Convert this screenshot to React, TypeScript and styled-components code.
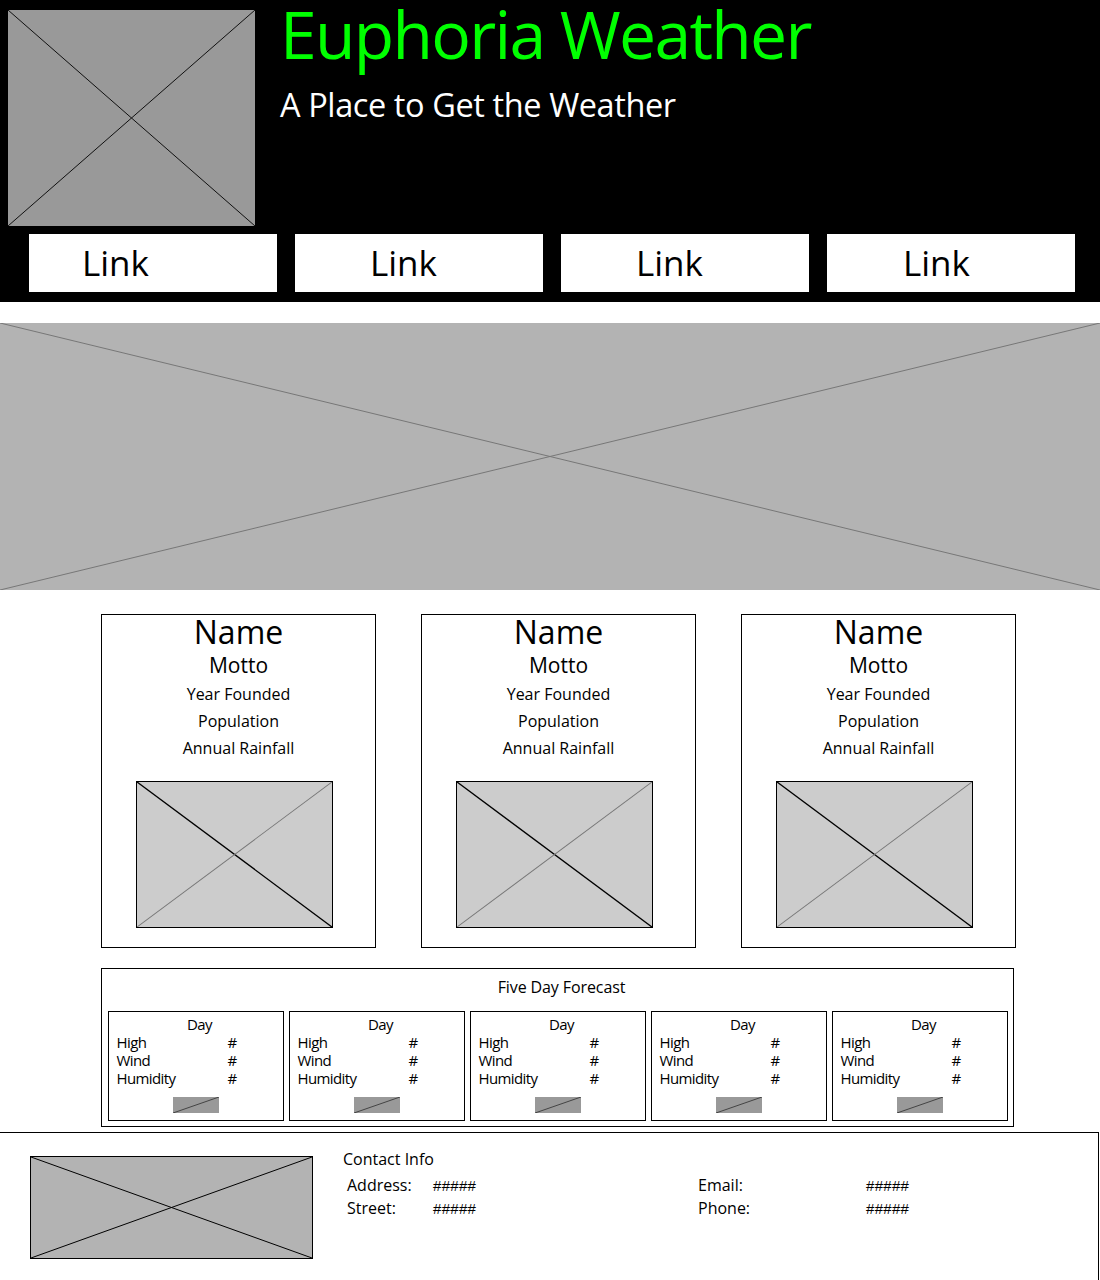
import React from "react";
import styled, { createGlobalStyle } from "styled-components";

const GlobalStyle = createGlobalStyle`
  html, body {
    margin: 0;
    padding: 0;
    background: #ffffff;
  }
  body {
    font-family: "Open Sans", "Noto Sans", sans-serif;
    color: #000000;
  }
`;

const Page = styled.div`
  width: 1100px;
  min-height: 1280px;
  display: flex;
  flex-direction: column;
`;

/* ---------- placeholder drawing ---------- */

const Frame = styled.div<{ $w: number; $h: number; $fill: string; $border?: string }>`
  width: ${({ $w }) => `${$w}px`};
  height: ${({ $h }) => `${$h}px`};
  background: ${({ $fill }) => $fill};
  border: ${({ $border }) => ($border ? `1px solid ${$border}` : "none")};
  box-sizing: border-box;
  flex-shrink: 0;

  svg {
    display: block;
    width: 100%;
    height: 100%;
  }
`;

interface PlaceholderProps {
  width: number;
  height: number;
  fill: string;
  border?: string;
  /** stroke of the line from top-left to bottom-right (omit to hide) */
  down?: string;
  downWidth?: number;
  /** stroke of the line from bottom-left to top-right (omit to hide) */
  up?: string;
  upWidth?: number;
}

function Placeholder({
  width,
  height,
  fill,
  border,
  down,
  downWidth = 1,
  up,
  upWidth = 1,
}: PlaceholderProps) {
  return (
    <Frame $w={width} $h={height} $fill={fill} $border={border}>
      <svg viewBox="0 0 100 100" preserveAspectRatio="none">
        {down && (
          <line
            x1="0"
            y1="0"
            x2="100"
            y2="100"
            stroke={down}
            strokeWidth={downWidth}
            vectorEffect="non-scaling-stroke"
          />
        )}
        {up && (
          <line
            x1="0"
            y1="100"
            x2="100"
            y2="0"
            stroke={up}
            strokeWidth={upWidth}
            vectorEffect="non-scaling-stroke"
          />
        )}
      </svg>
    </Frame>
  );
}

/* ---------- header ---------- */

const Header = styled.header`
  background: #000000;
  padding: 10px 0 10px 8px;
  display: flex;
  flex-direction: column;
  gap: 8px;
`;

const Brand = styled.div`
  display: flex;
  align-items: flex-start;
  gap: 25px;
`;

const Titles = styled.div`
  display: flex;
  flex-direction: column;
`;

const Title = styled.h1`
  margin: -1px 0 0 0;
  font-size: 66px;
  font-weight: 400;
  line-height: 48px;
  letter-spacing: -1.7px;
  color: #00ff00;
  white-space: nowrap;
`;

const Subtitle = styled.div`
  margin-top: 26px;
  font-size: 32.5px;
  line-height: 44px;
  letter-spacing: -0.4px;
  color: #ffffff;
`;

const Nav = styled.nav`
  display: flex;
  gap: 18px;
  padding-left: 21px;
`;

const NavLink = styled.a<{ $indent: number }>`
  width: 248px;
  height: 58px;
  background: #ffffff;
  box-sizing: border-box;
  padding-left: ${({ $indent }) => `${$indent}px`};
  font-size: 35px;
  line-height: 58px;
  color: #000000;
  text-decoration: none;
`;

/* ---------- hero ---------- */

const Hero = styled.section`
  margin-top: 21px;
`;

/* ---------- city cards ---------- */

const Cards = styled.section`
  display: flex;
  gap: 45px;
  padding: 24px 0 0 101px;
`;

const Card = styled.article`
  width: 275px;
  height: 334px;
  border: 1px solid #000000;
  box-sizing: border-box;
  display: flex;
  flex-direction: column;
  align-items: center;
`;

const CardName = styled.div`
  font-size: 32px;
  line-height: 34px;
`;

const CardMotto = styled.div`
  margin-top: 1px;
  font-size: 21px;
  line-height: 30px;
`;

const Facts = styled.div`
  margin-top: 1px;
  display: flex;
  flex-direction: column;
  align-items: center;
`;

const CardFact = styled.div`
  font-size: 16px;
  line-height: 27px;
`;

const CardImage = styled.div`
  margin-top: 19px;
  padding-right: 8px;
`;

/* ---------- forecast ---------- */

const Forecast = styled.section`
  margin: 20px 0 0 101px;
  width: 913px;
  height: 159px;
  border: 1px solid #000000;
  box-sizing: border-box;
  padding: 6px 5px 0 5px;
  display: flex;
  flex-direction: column;
  align-items: center;
`;

const ForecastTitle = styled.div`
  font-size: 16px;
  line-height: 24px;
  letter-spacing: -0.1px;
  padding-left: 8px;
`;

const DayRow = styled.div`
  margin-top: 12px;
  display: flex;
  gap: 5px;
`;

const DayCard = styled.div`
  width: 176px;
  height: 110px;
  border: 1px solid #000000;
  box-sizing: border-box;
  padding: 3px 0 0 8px;
  display: flex;
  flex-direction: column;
  font-size: 15px;
  letter-spacing: -0.6px;
  line-height: 18px;
`;

const DayName = styled.div`
  text-align: center;
`;

const Stat = styled.div`
  display: grid;
  grid-template-columns: 111px auto;
`;

const DayThumb = styled.div`
  margin: 10px 0 0 56px;
`;

/* ---------- footer ---------- */

const Footer = styled.footer`
  margin-top: 5px;
  width: 1099px;
  flex: 1;
  border-top: 1px solid #000000;
  border-right: 1px solid #000000;
  box-sizing: border-box;
  padding: 23px 0 0 30px;
  display: flex;
  gap: 30px;
`;

const Contact = styled.div`
  display: flex;
  flex-direction: column;
`;

const ContactTitle = styled.div`
  font-size: 16px;
  line-height: 24px;
  margin-top: -9px;
`;

const ContactGrid = styled.div`
  margin-top: 3px;
  padding-left: 4px;
  display: grid;
  grid-template-columns: 86px 265px 168px auto;
  font-size: 16px;
  line-height: 23px;
`;

const Hash = styled.span`
  font-family: "Liberation Sans", Arial, sans-serif;
  font-size: 15px;
  letter-spacing: 0.3px;
`;

const links = [53, 75, 75, 76];

const cities = [0, 1, 2];

const days = [0, 1, 2, 3, 4];

export default function App() {
  return (
    <Page>
      <GlobalStyle />
      <Header>
        <Brand>
          <Placeholder width={247} height={216} fill="#999999" down="#111" up="#111" />
          <Titles>
            <Title>Euphoria Weather</Title>
            <Subtitle>A Place to Get the Weather</Subtitle>
          </Titles>
        </Brand>
        <Nav>
          {links.map((indent, i) => (
            <NavLink key={i} href="#" $indent={indent}>
              Link
            </NavLink>
          ))}
        </Nav>
      </Header>

      <Hero>
        <Placeholder width={1100} height={267} fill="#b3b3b3" down="#777" up="#777" />
      </Hero>

      <Cards>
        {cities.map((c) => (
          <Card key={c}>
            <CardName>Name</CardName>
            <CardMotto>Motto</CardMotto>
            <Facts>
              <CardFact>Year Founded</CardFact>
              <CardFact>Population</CardFact>
              <CardFact>Annual Rainfall</CardFact>
            </Facts>
            <CardImage>
              <Placeholder
                width={197}
                height={147}
                fill="#cccccc"
                border="#000"
                down="#000"
                downWidth={1.4}
                up="#777"
              />
            </CardImage>
          </Card>
        ))}
      </Cards>

      <Forecast>
        <ForecastTitle>Five Day Forecast</ForecastTitle>
        <DayRow>
          {days.map((d) => (
            <DayCard key={d}>
              <DayName>Day</DayName>
              <Stat>
                <span>High</span>
                <span>#</span>
              </Stat>
              <Stat>
                <span>Wind</span>
                <span>#</span>
              </Stat>
              <Stat>
                <span>Humidity</span>
                <span>#</span>
              </Stat>
              <DayThumb>
                <Placeholder width={46} height={16} fill="#999999" up="#444" />
              </DayThumb>
            </DayCard>
          ))}
        </DayRow>
      </Forecast>

      <Footer>
        <Placeholder width={283} height={103} fill="#b3b3b3" border="#000" down="#000" up="#000" />
        <Contact>
          <ContactTitle>Contact Info</ContactTitle>
          <ContactGrid>
            <span>Address:</span>
            <Hash>#####</Hash>
            <span>Email:</span>
            <Hash>#####</Hash>
            <span>Street:</span>
            <Hash>#####</Hash>
            <span>Phone:</span>
            <Hash>#####</Hash>
          </ContactGrid>
        </Contact>
      </Footer>
    </Page>
  );
}
